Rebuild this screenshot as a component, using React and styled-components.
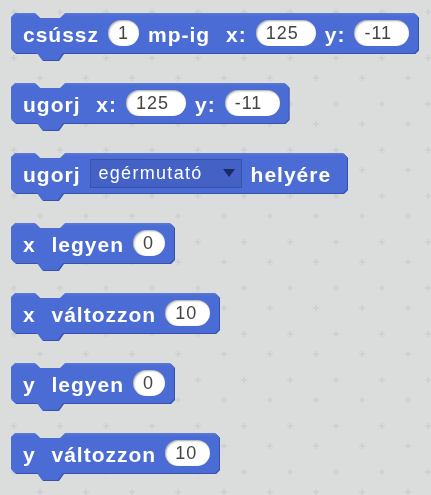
import React from 'react';
import styled, { createGlobalStyle } from 'styled-components';

const gridSvg = `<svg xmlns='http://www.w3.org/2000/svg' width='46' height='46'><g fill='#d0d2d2'><rect x='37' y='31' width='6' height='2'/><rect x='39' y='29' width='2' height='6'/><rect x='11' y='11' width='6' height='2'/><rect x='13' y='9' width='2' height='6'/></g></svg>`;

const GlobalStyle = createGlobalStyle`
    html, body {
        margin: 0;
        padding: 0;
    }
    body {
        background-color: #dbdcdc;
        background-image: url("data:image/svg+xml,${encodeURIComponent(gridSvg)}");
        background-position: 0 0;
    }
`;

const Canvas = styled.div`
    display: flex;
    flex-direction: column;
    align-items: flex-start;
    gap: 23px;
    padding: 13px 0 0 11px;
    min-height: 495px;
    box-sizing: border-box;
`;

const BlockEdge = styled.div`
    display: inline-flex;
    filter: drop-shadow(1px 1px 0 #3652aa);
`;

const BlockBody = styled.div`
    display: inline-flex;
    align-items: center;
    gap: 9px;
    height: 40px;
    padding: 0 9px 7px 12px;
    background: linear-gradient(#5a79da, #4a6cd4 3px);
    clip-path: polygon(
        0 4px, 4px 0, 24px 0, 29px 5px, 49px 5px, 54px 0,
        calc(100% - 4px) 0, 100% 4px,
        100% calc(100% - 11px), calc(100% - 4px) calc(100% - 7px),
        52px calc(100% - 7px), 47px 100%, 31px 100%, 26px calc(100% - 7px),
        4px calc(100% - 7px), 0 calc(100% - 11px)
    );
`;

const Label = styled.span`
    font: bold 21px "Liberation Sans", Arial, sans-serif;
    letter-spacing: 1px;
    word-spacing: 9px;
    color: #fff;
    white-space: pre;
    margin-top: 4px;
    &:last-child {
        margin-right: 7px;
    }
`;

const NumberField = styled.span`
    display: inline-flex;
    align-items: center;
    width: ${p => p.$w}px;
    height: 26px;
    padding-left: 10px;
    box-sizing: border-box;
    border-radius: 13px;
    background: #fff;
    box-shadow: inset 1px 1px 2px rgba(0, 0, 0, 0.35);
    font: 18px "Liberation Sans", Arial, sans-serif;
    letter-spacing: 1px;
    color: #444;
`;

const Menu = styled.span`
    display: inline-flex;
    align-items: center;
    gap: 20px;
    height: 29px;
    padding: 0 6px 0 8px;
    box-sizing: border-box;
    background: #4462c6;
    border: 1px solid #3852ab;
    color: #fff;
    font: 18px "Liberation Sans", Arial, sans-serif;
    letter-spacing: 1.3px;
`;

const Arrow = styled.span`
    width: 0;
    height: 0;
    border-left: 6px solid transparent;
    border-right: 6px solid transparent;
    border-top: 8px solid #1b2a66;
`;

function Block({ children }) {
    return (
        <BlockEdge>
            <BlockBody>{children}</BlockBody>
        </BlockEdge>
    );
}

function App() {
    return (
        <Canvas>
            <GlobalStyle />
            <Block>
                <Label>csússz</Label>
                <NumberField $w={31}>1</NumberField>
                <Label>mp-ig x:</Label>
                <NumberField $w={60}>125</NumberField>
                <Label>y:</Label>
                <NumberField $w={55}>-11</NumberField>
            </Block>
            <Block>
                <Label>ugorj x:</Label>
                <NumberField $w={60}>125</NumberField>
                <Label>y:</Label>
                <NumberField $w={55}>-11</NumberField>
            </Block>
            <Block>
                <Label>ugorj</Label>
                <Menu>
                    egérmutató
                    <Arrow />
                </Menu>
                <Label>helyére</Label>
            </Block>
            <Block>
                <Label>x legyen</Label>
                <NumberField $w={32}>0</NumberField>
            </Block>
            <Block>
                <Label>x változzon</Label>
                <NumberField $w={45}>10</NumberField>
            </Block>
            <Block>
                <Label>y legyen</Label>
                <NumberField $w={32}>0</NumberField>
            </Block>
            <Block>
                <Label>y változzon</Label>
                <NumberField $w={45}>10</NumberField>
            </Block>
        </Canvas>
    );
}

export default App;
